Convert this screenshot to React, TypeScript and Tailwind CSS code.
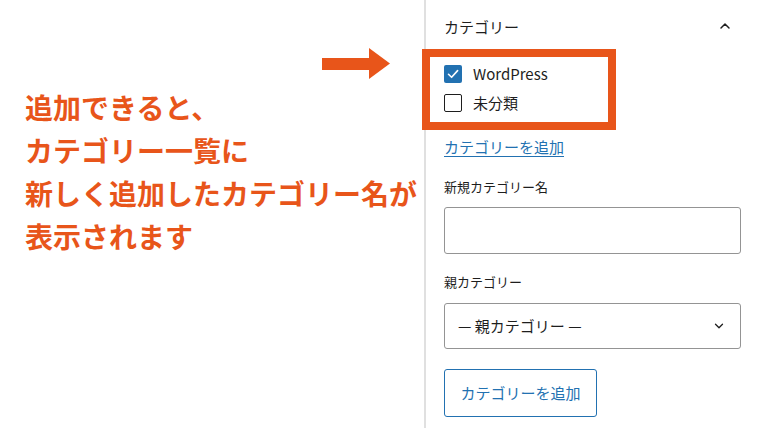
import { ChevronUp, ChevronDown } from "lucide-react";

const jp = "font-['Noto_Sans_CJK_JP','Noto_Sans',sans-serif]";

export default function App() {
    return (
        <div className={`w-[760px] h-[428px] flex bg-white text-[#1e1e1e] overflow-hidden ${jp}`}>
            {/* Annotation */}
            <div className="relative w-[424px] shrink-0 pt-[86px] pl-[25px]">
                {/* Arrow */}
                <svg className="absolute left-[322px] top-[48px]" width="68" height="31" viewBox="0 0 68 31">
                    <rect x="0" y="10" width="49" height="12" fill="#e8551a" />
                    <polygon points="47,0 68,15.5 47,31" fill="#e8551a" />
                </svg>
                <p className="text-[28px] leading-[43px] font-bold text-[#e8551a] whitespace-nowrap tracking-[0px]">
                    追加できると、<br />
                    カテゴリー一覧に<br />
                    新しく追加したカテゴリー名が<br />
                    表示されます
                </p>
            </div>

            {/* Sidebar panel */}
            <div className="flex-1 border-l-[2px] border-[#e0e0e0] pl-[18px] pr-[19px] flex flex-col">
                {/* Header */}
                <div className="h-[49px] pt-[17px] flex items-start justify-between">
                    <span className="text-[15px] leading-[20px]">カテゴリー</span>
                    <ChevronUp className="mt-[1px] mr-[8px]" size={16} strokeWidth={2.2} />
                </div>

                {/* Category list (highlighted) */}
                <div className="-ml-[22px] w-[194px] h-[81px] border-[8px] border-[#e8551a] pl-[14px] pt-[2px] flex flex-col">
                    <div className="h-[29px] flex items-center gap-[11px]">
                        <span className="w-[18px] h-[18px] rounded-[2px] bg-[#2271b1] flex items-center justify-center">
                            <svg width="14" height="14" viewBox="0 0 14 14" fill="none">
                                <path d="M2.5 7.3 L5.6 10.3 L11.6 3.6" stroke="white" strokeWidth="1.6" strokeLinecap="round" strokeLinejoin="round" />
                            </svg>
                        </span>
                        <span className="text-[15px] leading-[20px]">WordPress</span>
                    </div>
                    <div className="h-[29px] flex items-center gap-[11px]">
                        <span className="w-[18px] h-[18px] rounded-[2px] border-[1.5px] border-[#1e1e1e] bg-white" />
                        <span className="text-[15px] leading-[20px]">未分類</span>
                    </div>
                </div>

                {/* Add link */}
                <a className="mt-[7px] text-[15px] leading-[20px] text-[#2271b1] underline underline-offset-[3px] w-fit">カテゴリーを追加</a>

                {/* New category name */}
                <label className="mt-[21px] text-[13px] leading-[18px]">新規カテゴリー名</label>
                <div className="mt-[11px] h-[47px] border border-[#949494] rounded-[3px]" />

                {/* Parent category */}
                <label className="mt-[19px] text-[13px] leading-[18px]">親カテゴリー</label>
                <div className="mt-[12px] h-[46px] border border-[#949494] rounded-[3px] flex items-center justify-between pl-[13px] pr-[14px]">
                    <span className="text-[15px] leading-[20px]">— 親カテゴリー —</span>
                    <ChevronDown size={14} strokeWidth={2.2} />
                </div>

                {/* Submit */}
                <button className="mt-[20px] h-[48px] w-[153px] border border-[#2271b1] rounded-[3px] text-[15px] leading-[20px] text-[#2271b1] bg-white">
                    カテゴリーを追加
                </button>
            </div>
        </div>
    );
}
